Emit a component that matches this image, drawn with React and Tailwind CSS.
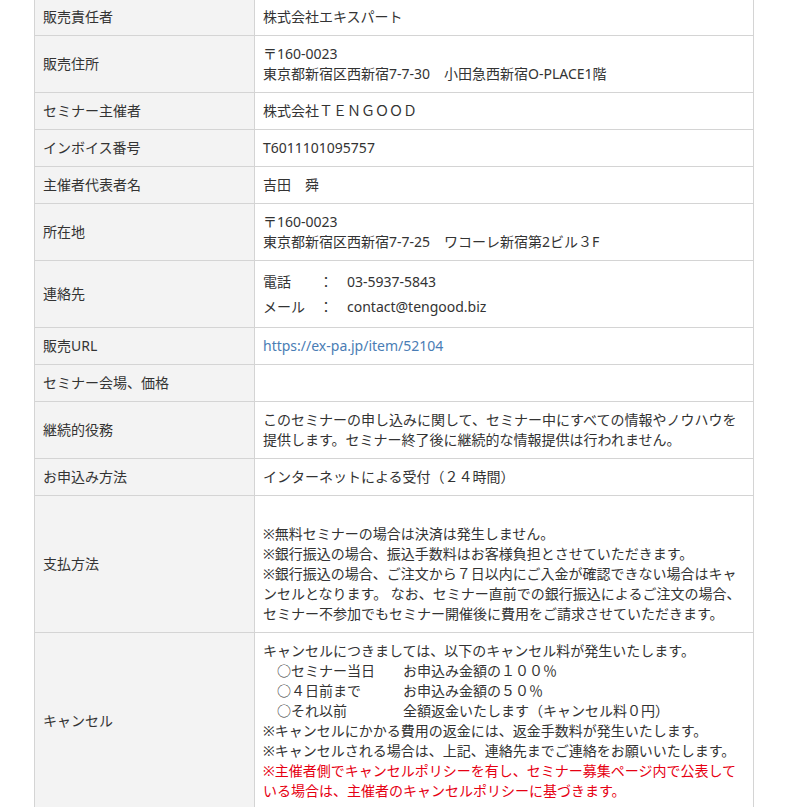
import React from "react";

const rows = [
  { label: "販売責任者", content: <>株式会社エキスパート</> },
  {
    label: "販売住所",
    content: (
      <>
        〒160-0023
        <br />
        {"東京都新宿区西新宿7-7-30　小田急西新宿O-PLACE1階"}
      </>
    ),
  },
  { label: "セミナー主催者", content: <>株式会社ＴＥＮＧＯＯＤ</> },
  { label: "インボイス番号", content: <>T6011101095757</> },
  { label: "主催者代表者名", content: <>{"吉田　舜"}</> },
  {
    label: "所在地",
    content: (
      <>
        〒160-0023
        <br />
        {"東京都新宿区西新宿7-7-25　ワコーレ新宿第2ビル３F"}
      </>
    ),
  },
  {
    label: "連絡先",
    content: (
      <div className="leading-[25px]">
        <div>{"電話　　：　03-5937-5843"}</div>
        <div>{"メール　：　contact@tengood.biz"}</div>
      </div>
    ),
  },
  {
    label: "販売URL",
    content: (
      <a href="#" className="text-[#4a7db5]">
        https://ex-pa.jp/item/52104
      </a>
    ),
  },
  { label: "セミナー会場、価格", content: null },
  {
    label: "継続的役務",
    content: (
      <>
        このセミナーの申し込みに関して、セミナー中にすべての情報やノウハウを
        <br />
        提供します。セミナー終了後に継続的な情報提供は行われません。
      </>
    ),
  },
  { label: "お申込み方法", content: <>インターネットによる受付（２４時間）</> },
  {
    label: "支払方法",
    content: (
      <>
        <br />
        ※無料セミナーの場合は決済は発生しません。
        <br />
        ※銀行振込の場合、振込手数料はお客様負担とさせていただきます。
        <br />
        ※銀行振込の場合、ご注文から７日以内にご入金が確認できない場合はキャ
        <br />
        ンセルとなります。 なお、セミナー直前での銀行振込によるご注文の場合、
        <br />
        セミナー不参加でもセミナー開催後に費用をご請求させていただきます。
      </>
    ),
  },
  {
    label: "キャンセル",
    content: (
      <>
        キャンセルにつきましては、以下のキャンセル料が発生いたします。
        <br />
        {"　○セミナー当日　　お申込み金額の１００％"}
        <br />
        {"　○４日前まで　　　お申込み金額の５０％"}
        <br />
        {"　○それ以前　　　　全額返金いたします（キャンセル料０円）"}
        <br />
        ※キャンセルにかかる費用の返金には、返金手数料が発生いたします。
        <br />
        ※キャンセルされる場合は、上記、連絡先までご連絡をお願いいたします。
        <br />
        <span className="text-[#e60012]">
          ※主催者側でキャンセルポリシーを有し、セミナー募集ページ内で公表して
          <br />
          いる場合は、主催者のキャンセルポリシーに基づきます。
        </span>
      </>
    ),
  },
];

export default function App() {
  return (
    <div
      className="w-[790px] h-[807px] overflow-hidden bg-white text-[#333] text-[14px] leading-[20px]"
      style={{ fontFamily: '"Noto Sans", "Noto Sans CJK JP", sans-serif' }}
    >
      <table className="ml-[34px] mt-[-2px] w-[720px] table-fixed border-collapse">
        <colgroup>
          <col className="w-[220px]" />
          <col />
        </colgroup>
        <tbody>
          {rows.map((r, i) => (
            <tr key={i}>
              <th className="border border-[#d4d4d4] bg-[#f3f3f3] px-2 py-2 text-left font-normal align-middle whitespace-nowrap">
                {r.label}
              </th>
              <td className="border border-[#d4d4d4] bg-white px-2 py-2 align-middle whitespace-pre">
                {r.content ?? <span>&nbsp;</span>}
              </td>
            </tr>
          ))}
        </tbody>
      </table>
    </div>
  );
}
